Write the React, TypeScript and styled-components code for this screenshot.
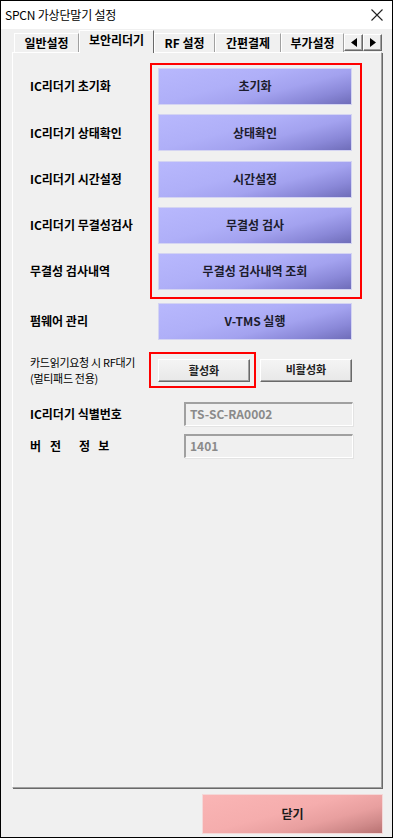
import styled, { createGlobalStyle } from 'styled-components';

const GlobalStyle = createGlobalStyle`
    html, body {
        margin: 0;
        padding: 0;
        background: #ffffff;
    }
    * {
        box-sizing: border-box;
    }
    body {
        font-family: "Noto Sans CJK KR", "Noto Sans", sans-serif;
        line-height: 1.2;
        color: #000;
    }
`;

const actionRows = [
    { label: 'IC리더기 초기화', button: '초기화' },
    { label: 'IC리더기 상태확인', button: '상태확인' },
    { label: 'IC리더기 시간설정', button: '시간설정' },
    { label: 'IC리더기 무결성검사', button: '무결성 검사' },
    { label: '무결성 검사내역', button: '무결성 검사내역 조회' },
];

const tabs = [
    { name: '일반설정', width: 65 },
    { name: '보안리더기', width: 75, active: true },
    { name: 'RF 설정', width: 61 },
    { name: '간편결제', width: 66 },
    { name: '부가설정', width: 63 },
];

function App() {
    return (
        <>
            <GlobalStyle />
            <Window>
                <TitleBar>
                    <Title>SPCN 가상단말기 설정</Title>
                    <CloseIcon width="12" height="12" viewBox="0 0 12 12">
                        <path d="M0.5 0.5 L11.5 11.5 M11.5 0.5 L0.5 11.5" stroke="#222" strokeWidth="1.1" />
                    </CloseIcon>
                </TitleBar>

                <Body>
                    <TabStrip>
                        {tabs.map((t) => (
                            <Tab key={t.name} $width={t.width} $active={t.active}>
                                {t.name}
                            </Tab>
                        ))}
                        <ArrowButton>
                            <svg width="6" height="9" viewBox="0 0 6 9">
                                <polygon points="6,0 0,4.5 6,9" fill="#000" />
                            </svg>
                        </ArrowButton>
                        <ArrowButton>
                            <svg width="6" height="9" viewBox="0 0 6 9">
                                <polygon points="0,0 6,4.5 0,9" fill="#000" />
                            </svg>
                        </ArrowButton>
                    </TabStrip>

                    <Panel>
                        <ActionSection>
                            <LabelColumn>
                                {actionRows.map((r) => (
                                    <ActionLabel key={r.label}>{r.label}</ActionLabel>
                                ))}
                            </LabelColumn>
                            <HighlightBox>
                                {actionRows.map((r) => (
                                    <PurpleButton key={r.button}>{r.button}</PurpleButton>
                                ))}
                            </HighlightBox>
                        </ActionSection>

                        <Row $top={4}>
                            <Label $width={128}>펌웨어 관리</Label>
                            <PurpleButton>V-TMS 실행</PurpleButton>
                        </Row>

                        <Row $top={12}>
                            <SmallLabel>
                                카드읽기요청 시 RF대기
                                <br />
                                (멀티패드 전용)
                            </SmallLabel>
                            <SmallHighlight>
                                <GrayButton>활성화</GrayButton>
                            </SmallHighlight>
                            <GrayButton $gap={4}>비활성화</GrayButton>
                        </Row>

                        <Row $top={14}>
                            <Label $width={154}>IC리더기 식별번호</Label>
                            <ReadOnlyField>TS-SC-RA0002</ReadOnlyField>
                        </Row>

                        <Row $top={8}>
                            <Label $width={154}>
                                <Spaced $gap={9}>버</Spaced>
                                <Spaced $gap={18}>전</Spaced>
                                <Spaced $gap={8}>정</Spaced>
                                <Spaced>보</Spaced>
                            </Label>
                            <ReadOnlyField>1401</ReadOnlyField>
                        </Row>
                    </Panel>

                    <Footer>
                        <CloseButton>닫기</CloseButton>
                    </Footer>
                </Body>
            </Window>
        </>
    );
}

const Window = styled.div`
    width: 393px;
    height: 838px;
    border: 1px solid #000;
    background: #f0f0f0;
    display: flex;
    flex-direction: column;
    overflow: hidden;
`;

const TitleBar = styled.div`
    height: 28px;
    background: #ffffff;
    display: flex;
    align-items: center;
    justify-content: space-between;
    padding: 0 9px 0 4px;
`;

const Title = styled.div`
    font-size: 12px;
    color: #000;
    letter-spacing: -0.2px;
`;

const CloseIcon = styled.svg`
    display: block;
`;

const Body = styled.div`
    flex: 1;
    display: flex;
    flex-direction: column;
    padding: 0 9px 0 11px;
`;

const TabStrip = styled.div`
    height: 23px;
    display: flex;
    align-items: flex-end;
    padding-left: 2px;
`;

const Tab = styled.div<{ $width: number; $active?: boolean }>`
    width: ${(p) => p.$width}px;
    height: ${(p) => (p.$active ? 23 : 19)}px;
    display: flex;
    align-items: center;
    justify-content: center;
    padding-bottom: ${(p) => (p.$active ? 3 : 0)}px;
    font-size: 12px;
    font-weight: 700;
    white-space: nowrap;
    overflow: hidden;
    background: #f0f0f0;
    border-top: 1px solid #ffffff;
    border-left: 1px solid #ffffff;
    border-right: 1px solid ${(p) => (p.$active ? '#696969' : '#a0a0a0')};
    position: relative;
    z-index: ${(p) => (p.$active ? 2 : 1)};
    margin-bottom: ${(p) => (p.$active ? -1 : 0)}px;
`;

const ArrowButton = styled.div`
    width: 19px;
    height: 17px;
    margin-bottom: 1px;
    display: flex;
    align-items: center;
    justify-content: center;
    background: #f0f0f0;
    border-top: 1px solid #ffffff;
    border-left: 1px solid #ffffff;
    border-right: 1px solid #696969;
    border-bottom: 1px solid #696969;
    box-shadow: inset -1px -1px 0 #a0a0a0;
    flex-shrink: 0;
`;

const Panel = styled.div`
    height: 736px;
    width: 370px;
    border-top: 1px solid #ffffff;
    border-left: 1px solid #ffffff;
    border-right: 1px solid #a0a0a0;
    border-bottom: 1px solid #a0a0a0;
    box-shadow: 1px 1px 0 #696969;
    padding: 10px 0 0 17px;
    display: flex;
    flex-direction: column;
`;

const ActionSection = styled.div`
    display: flex;
`;

const LabelColumn = styled.div`
    width: 120px;
    padding-top: 5px;
    display: flex;
    flex-direction: column;
    gap: 9.25px;
`;

const Label = styled.div<{ $width?: number }>`
    width: ${(p) => p.$width ?? 120}px;
    flex-shrink: 0;
    font-size: 12px;
    font-weight: 700;
    white-space: nowrap;
    display: flex;
    align-items: center;
`;

const ActionLabel = styled(Label)`
    height: 37px;
`;

const SmallLabel = styled.div`
    width: 119px;
    flex-shrink: 0;
    font-size: 11px;
    line-height: 16px;
    white-space: nowrap;
    letter-spacing: -0.3px;
`;

const Spaced = styled.span<{ $gap?: number }>`
    margin-right: ${(p) => p.$gap ?? 0}px;
`;

const HighlightBox = styled.div`
    width: 212px;
    border: 2px solid #ff0000;
    padding: 3px 8px 7px 6px;
    display: flex;
    flex-direction: column;
    gap: 9.25px;
`;

const PurpleButton = styled.div`
    width: 194px;
    height: 37px;
    display: flex;
    align-items: center;
    justify-content: center;
    font-size: 12px;
    font-weight: 700;
    color: #1c1c2c;
    border: 1px solid #d4d4f2;
    background: linear-gradient(
        165deg,
        #b8b8fd 0%,
        #afaff8 40%,
        #a3a2ef 62%,
        #8a88d8 82%,
        #6f6db9 100%
    );
    flex-shrink: 0;
`;

const Row = styled.div<{ $top: number }>`
    display: flex;
    align-items: center;
    margin-top: ${(p) => p.$top}px;
`;

const SmallHighlight = styled.div`
    border: 2px solid #ff0000;
    padding: 5px 4px 4px 7px;
    display: flex;
`;

const GrayButton = styled.div<{ $gap?: number }>`
    width: 92px;
    height: 23px;
    margin-left: ${(p) => p.$gap ?? 0}px;
    display: flex;
    align-items: center;
    justify-content: center;
    font-size: 11px;
    font-weight: 700;
    color: #222;
    background: linear-gradient(180deg, #f4f4f4 0%, #e8e8e8 100%);
    border-top: 1px solid #ffffff;
    border-left: 1px solid #ffffff;
    border-right: 1px solid #696969;
    border-bottom: 1px solid #696969;
    box-shadow: inset -1px -1px 0 #a0a0a0;
`;

const ReadOnlyField = styled.div`
    width: 169px;
    height: 24px;
    display: flex;
    align-items: center;
    padding-left: 4px;
    font-size: 12px;
    font-weight: 700;
    color: #8a8a8a;
    background: #f0f0f0;
    border-top: 2px solid #a0a0a0;
    border-left: 2px solid #a0a0a0;
    border-right: 1px solid #ffffff;
    border-bottom: 1px solid #ffffff;
    box-shadow: 1px 1px 0 #e3e3e3;
`;

const Footer = styled.div`
    display: flex;
    justify-content: flex-end;
    padding-top: 6px;
`;

const CloseButton = styled.div`
    width: 181px;
    height: 40px;
    display: flex;
    align-items: center;
    justify-content: center;
    font-size: 12px;
    font-weight: 700;
    color: #1a1a1a;
    border: 1px solid #f4d8d8;
    background: linear-gradient(
        165deg,
        #fab5b5 0%,
        #f5adad 45%,
        #e89f9f 68%,
        #d08a8a 85%,
        #b87272 100%
    );
`;

export default App;
